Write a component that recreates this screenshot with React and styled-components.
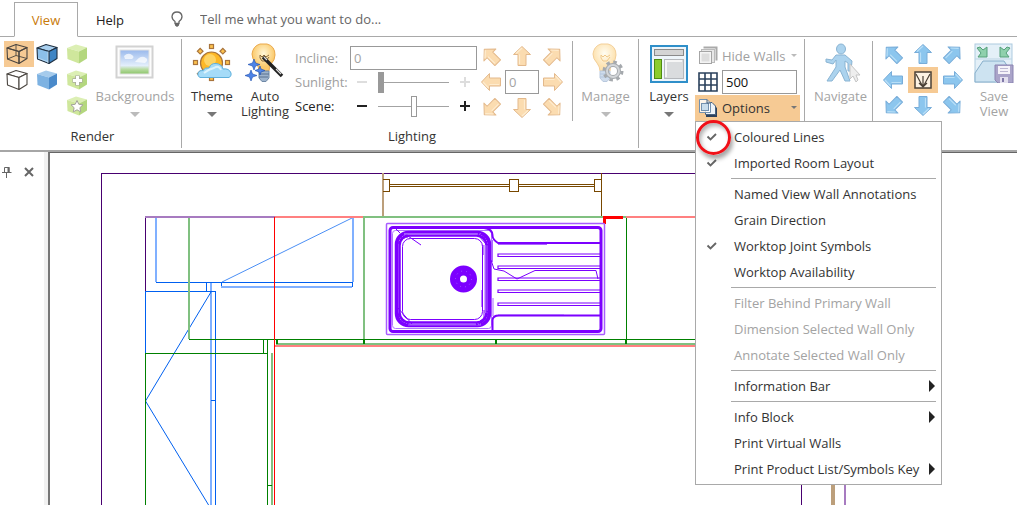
import React, { useState } from 'react'
import styled, { createGlobalStyle, css } from 'styled-components'

const menuGroups = [
  [
    { id: 'coloured', label: 'Coloured Lines', checked: true },
    { id: 'imported', label: 'Imported Room Layout', checked: true },
  ],
  [
    { id: 'named', label: 'Named View Wall Annotations' },
    { id: 'grain', label: 'Grain Direction' },
    { id: 'joint', label: 'Worktop Joint Symbols', checked: true },
    { id: 'availability', label: 'Worktop Availability' },
  ],
  [
    { id: 'filter', label: 'Filter Behind Primary Wall', disabled: true },
    { id: 'dimension', label: 'Dimension Selected Wall Only', disabled: true },
    { id: 'annotate', label: 'Annotate Selected Wall Only', disabled: true },
  ],
  [{ id: 'infobar', label: 'Information Bar', sub: true }],
  [
    { id: 'infoblock', label: 'Info Block', sub: true },
    { id: 'virtual', label: 'Print Virtual Walls' },
    { id: 'product', label: 'Print Product List/Symbols Key', sub: true },
  ],
]

// angle of each arrow, null is the middle cell
const compass = [-45, 0, 45, -90, null, 90, -135, 180, 135]
const compassNames = ['Up left', 'Up', 'Up right', 'Left', '', 'Right', 'Down left', 'Down', 'Down right']

const cubeFills = {
  wire: ['none', 'none', 'none'],
  hidden: ['#fff', '#fff', '#fff'],
  lined: ['#a9d0ef', '#8cc0ea', '#3f85c4'],
  solid: ['#a5cbec', '#7db2e2', '#4a8aca'],
  green: ['#dcefb4', '#cfe79c', '#b4d77e'],
}

function Cube({ kind, mark }) {
  const [top, left, right] = cubeFills[kind]
  const line = kind === 'green' || kind === 'solid' ? 'none' : kind === 'lined' ? '#1f2f40' : '#4a4540'
  return (
    <svg width="22" height="22" viewBox="0 0 22 22" aria-hidden="true">
      <g stroke={line} strokeWidth="1.1" strokeLinejoin="round">
        <path d="M1 5 10 1.500 21 4.500 13 8.500Z" fill={top} />
        <path d="M1 5 13 8.500V20.500L1.500 16Z" fill={left} />
        <path d="M13 8.500 21 4.500V15.500L13 20.500Z" fill={right} />
        {kind === 'wire' && <path d="M10 1.500V12.500M10 12.500 1.500 16M10 12.500 21 15.500" fill="none" strokeWidth="0.9" />}
      </g>
      {kind === 'lined' && <path d="M12 8.500V20M2 15 12 18.800" stroke="#c3e0f6" strokeWidth="0.8" />}
      {mark === 'plus' && <path d="M11.500 6.500V16.500M6.500 11.500H16.500" stroke="#a9a9a0" strokeWidth="4.600" />}
      {mark === 'plus' && <path d="M11.500 7V16M7 11.500H16" stroke="#fff" strokeWidth="3" />}
      {mark === 'star' && (
        <path
          d="M11 5.500 12.800 9.300 17 9.800 13.900 12.700 14.700 16.900 11 14.800 7.300 16.900 8.100 12.700 5 9.800 9.200 9.300Z"
          fill="#fff"
          stroke="#a4a49b"
        />
      )}
    </svg>
  )
}

function Arrow({ angle, tone }) {
  const blue = tone === 'blue'
  return (
    <svg width="22" height="22" viewBox="0 0 22 22" aria-hidden="true">
      <g transform={`rotate(${angle} 11 11)`}>
        <path
          d="M11 1.500 19.500 9.500H15V20.500H7V9.500H2.500Z"
          fill={blue ? '#8cc6ee' : '#fbdcb0'}
          stroke={blue ? '#79add9' : '#e3b98c'}
          strokeLinejoin="round"
        />
        <path d="M11 3 5 8.500M8.500 9.500V19" fill="none" stroke={blue ? '#b9dff7' : '#feeccf'} strokeWidth="1.200" />
      </g>
    </svg>
  )
}

function Bulb({ children, faded }) {
  return (
    <svg width="40" height="40" viewBox="0 0 40 40" aria-hidden="true">
      <defs>
        <radialGradient id={faded ? 'bulbFaded' : 'bulb'} cx="0.5" cy="0.35">
          <stop offset="0" stopColor={faded ? '#fffdf2' : '#fff7d8'} />
          <stop offset="1" stopColor={faded ? '#fde2b0' : '#fbc969'} />
        </radialGradient>
      </defs>
      <path
        d="M15 1H22Q30 3 30 12 30 17 26 21 24 24 24 28H14Q14 24 11 20 7 16 7 11 8 3 15 1Z"
        fill={`url(#${faded ? 'bulbFaded' : 'bulb'})`}
        stroke={faded ? '#f3cf98' : '#eaa94c'}
      />
      <path d="M15 15 17 18H21L24 14M15 15V12L17 14 19 12 21 14 24 12" fill="none" stroke={faded ? '#f0c98a' : '#8b6a3a'} strokeWidth="1" />
      <path d="M14 28H24V35L21 38.500H17L14 35Z" fill={faded ? '#cfdcec' : '#9db3cc'} stroke={faded ? '#b9c9de' : '#6f88a6'} />
      <path d="M14 31H24M14 34H23" stroke={faded ? '#b4c6dd' : '#58718f'} />
      {children}
    </svg>
  )
}

function ThemeIcon() {
  return (
    <svg width="40" height="40" viewBox="0 0 40 40" aria-hidden="true">
      <g fill="#fcc24e" stroke="#a8743c" strokeWidth="1.200">
        {[-135, -90, -45, 0, 45, 90, 180].map((a) => (
          <rect key={a} x="17.500" y="1.500" width="4" height="4" transform={`rotate(${a} 19.500 19.500)`} />
        ))}
        <circle cx="19.500" cy="20" r="11" fill="#fdb827" />
      </g>
      <circle cx="18" cy="17" r="6" fill="#fed465" />
      <path
        d="M8 34.500Q5 33 6 30 7 27 11 27.500 13 24 17 25 19 20 24 20.500 30 21 31 26 37 25 39 30 40 33 37 34.500Z"
        fill="#a5dbf8"
        stroke="#5fb0dc"
      />
      <path d="M12 30Q17 26 22 25 27 22 29 27" fill="none" stroke="#dcf3fd" strokeWidth="2" />
    </svg>
  )
}

function PictureIcon() {
  return (
    <svg width="40" height="40" viewBox="0 0 40 40" aria-hidden="true">
      <defs>
        <linearGradient id="sky" x1="0" y1="0" x2="0" y2="1">
          <stop offset="0" stopColor="#9ab9ec" />
          <stop offset="0.65" stopColor="#e3eefb" />
          <stop offset="0.8" stopColor="#b9dca2" />
          <stop offset="1" stopColor="#8cc56b" />
        </linearGradient>
      </defs>
      <rect x="1.500" y="3.500" width="36" height="31" fill="#fdfdfd" stroke="#d2d2d2" strokeWidth="2" />
      <rect x="5" y="7" width="29" height="24" fill="url(#sky)" stroke="#e2e2e2" />
      <path d="M9 13Q13 9 17 12 20 14 17 16H10ZM20 19Q26 11 31 15 34 17 30 20Z" fill="#fff" opacity="0.7" />
    </svg>
  )
}

function LayersIcon() {
  return (
    <svg width="40" height="40" viewBox="0 0 40 40" aria-hidden="true">
      <rect x="2" y="3" width="36" height="36" fill="#eef5fa" stroke="#2f8fc9" strokeWidth="2" />
      <rect x="5.500" y="6.500" width="29" height="6" fill="#d4d4d4" stroke="#8a8a8a" />
      <rect x="5.500" y="16.500" width="7" height="19" fill="#8ccc2c" stroke="#4f8c12" />
      <rect x="15.500" y="16.500" width="19" height="19" fill="#dadcde" stroke="#b5b8bc" />
      <path d="M17 34V18H33" fill="none" stroke="#f6f6f6" strokeWidth="2" />
    </svg>
  )
}

function NavigateIcon() {
  return (
    <svg width="40" height="40" viewBox="0 0 40 40" aria-hidden="true">
      <g fill="#acd3ee" stroke="#8ab4d3" strokeLinejoin="round">
        <ellipse cx="20" cy="6" rx="4.500" ry="5" />
        <path d="M15 12H24L31 18 30 28 27 28 27 20 24 18V24L29 38H24L19 27 11 38H6L15 24V17L12 21 5 19V16L11 17Z" />
      </g>
      <path d="M29 21V36L32 33 35 39 37 37 35 32H39Z" fill="#eee" stroke="#c5c5c5" />
    </svg>
  )
}

function SaveViewIcon() {
  return (
    <svg width="40" height="40" viewBox="0 0 40 40" aria-hidden="true">
      <rect x="1" y="1" width="37" height="38" fill="#e4f0f8" stroke="#aecbe0" />
      <path d="M1 30 9 18H30L38 30V39H1Z" fill="#cde3f1" stroke="#86aeca" />
      <path d="M1 16H38" stroke="#bdd5e5" />
      <g fill="#8fd0ac" stroke="#55a07b">
        <path d="M3 5 6 4 9 7 13 4V14H4L7 10Z" />
        <path d="M36 5 33 4 30 7 26 4V14H35L32 10Z" />
      </g>
      <path d="M21 22H39V40H24L21 37Z" fill="#aaa4c9" stroke="#8b84b1" />
      <rect x="24" y="23" width="12" height="8" fill="#f5f3f9" />
      <path d="M26 25.500H34M26 28.500H34" stroke="#bdb8d2" />
      <rect x="26" y="34" width="8" height="6" fill="#e4e1ef" />
      <rect x="28" y="35" width="2" height="4" fill="#8079a8" />
    </svg>
  )
}

function WallsIcon() {
  return (
    <svg width="20" height="20" viewBox="0 0 20 20" aria-hidden="true">
      <path d="M5.500 1.500H18.500V14.500" fill="none" stroke="#aaa" strokeWidth="2" />
      <rect x="3.500" y="3.500" width="13" height="13" fill="#e7e7e7" stroke="#bbb" />
      <rect x="1.500" y="5.500" width="12" height="12" fill="#f4f4f4" stroke="#a5a5a5" />
      <rect x="3.500" y="7.500" width="8" height="8" fill="#ddd" />
    </svg>
  )
}

function GridIcon() {
  return (
    <svg width="20" height="20" viewBox="0 0 20 20" aria-hidden="true">
      <path d="M1 1H19V19H1ZM7 1V19M13 1V19M1 7H19M1 13H19" fill="#fff" stroke="#2b415c" strokeWidth="1.600" />
    </svg>
  )
}

function OptionsIcon() {
  return (
    <svg width="20" height="20" viewBox="0 0 20 20" aria-hidden="true">
      <path d="M8 6H15L19 10V19H8Z" fill="#2b415c" />
      <path d="M7.500 4.500H14L17.500 8V16.500H7.500Z" fill="#eef4f9" stroke="#47617f" />
      <path d="M1.500 1.500H9L12.500 5V14.500H1.500Z" fill="#fff" fillOpacity="0.8" stroke="#7390ae" />
      <rect x="3.500" y="5.500" width="7" height="7" fill="#c9ddec" stroke="#7390ae" />
      <path d="M9 1.500V5H12.500" fill="none" stroke="#47617f" />
    </svg>
  )
}

function Check() {
  return (
    <svg width="12" height="10" viewBox="0 0 12 10" aria-hidden="true">
      <path d="M1.500 4.500 4.500 7.500 10 2" fill="none" stroke="#666" strokeWidth="1.900" />
    </svg>
  )
}

// plan view of the kitchen, in drawing units of one pixel
function Plan() {
  return (
    <PlanSvg role="img" aria-label="Kitchen plan">
      <g transform="translate(-50 -153)" fill="none" shapeRendering="crispEdges">
        <g stroke="#480070">
          <path d="M101.500 1000V173.500H801.500V1000M145.500 217V291" />
          <path d="M145 217H275M845 217V1000" stroke="#a77bc0" strokeWidth="2" />
        </g>
        <g stroke="#bc9f7b" strokeWidth="4">
          <path d="M833 350V1000" />
          <path d="M383 173V216" strokeWidth="2" />
        </g>
        <g stroke="#784800">
          <path d="M601.500 173V216M389 184.500H509M389 186.500H509M519 184.500H595M519 186.500H595" />
          <path d="M383 179.500H389.500V191.500H383M509.500 179.500H518.500V191.500H509.500ZM601 179.500H594.500V191.500H601" />
        </g>
        <g stroke="#80b0ff" strokeWidth="2">
          <path d="M156 218V282M353 218V282M221 287H352M211 283V1000" />
        </g>
        <g stroke="#0060f0">
          <path d="M156 282.500H353M221.500 282V286M352.500 282V287M206.500 282V291M145 291.500H215.500V1000M145.500 291V354M211 400.500H215" />
          <path d="M222 282 352 218" stroke="#4b8ff5" shapeRendering="auto" />
          <path d="M211 292 145.500 401 211 509" shapeRendering="auto" />
        </g>
        <g stroke="#80c080" strokeWidth="2">
          <path d="M189 218V339M364 218V340M276 344H845M272 353V1000M363 217H626" />
        </g>
        <g stroke="#008000">
          <path d="M145.500 354V1000M145 353.500H267M263.500 339V353M267.500 339V1000M189 339.500H845M626.500 217V344M267 485H272" />
          <path d="M276.500 339V344M364 339V344M495.500 339V344M626 339V344" strokeWidth="2" />
        </g>
        <g stroke="#ff8080" strokeWidth="2">
          <path d="M275 217H363M626 217H845M275 346H845" />
        </g>
        <path d="M274.500 217V1000" stroke="#f00" />
        <path d="M604.500 224V217.500H623" stroke="#f00" strokeWidth="3" />
      </g>
      <g transform="translate(-50 -153)" fill="none" stroke="#7c00ff">
        <rect x="386.500" y="223.500" width="218" height="111" rx="1" stroke="#a95cff" strokeWidth="1.500" />
        <rect x="390" y="227.500" width="211" height="104" rx="3" strokeWidth="3" />
        <rect x="392.500" y="230.500" width="99" height="98" rx="3" stroke="#b377ff" />
        <rect x="396.500" y="232.500" width="93" height="93" rx="12" strokeWidth="3.500" />
        <rect x="399.500" y="235.500" width="87" height="87" rx="10" strokeWidth="2.500" />
        <rect x="402.500" y="238.500" width="80" height="81" rx="8" />
        <path d="M404 234H481M408 324.500H481M485.500 245V313" strokeWidth="2" stroke="#a55cff" />
        <path d="M396 229 400 233M397 244 407 235M396 241 404 233M481 233 489 242M478 235 487 245M397 313 407 323M398 308 412 324M478 323 489 314M484 310V322M408 236 421 245M483 245V255M482 290V307" />
        <path d="M397 244Q399 237 408 236M397 313Q400 322 410 324M476 324Q487 321 488 311M478 233Q487 236 488 246" strokeWidth="3" strokeDasharray="1.500 1" />
        <circle cx="463.500" cy="279" r="8.500" strokeWidth="10" />
        <circle cx="463.500" cy="279" r="8" stroke="#a45aff" strokeDasharray="1 4" />
        <path d="M484 228Q493 229 492.500 236 493 240 498 243H600M492.500 331V320Q493 315.500 499 315.500H600" strokeWidth="2" />
        <path d="M498 244.500H547M498 314.500H564M492.500 240V262M493 298V316" stroke="#aa66ff" />
        <path d="M600 254H498V256.500H600M600 266H498V268.500H600M600 278H498V280.500H600M600 290H498V292.500H600M600 303H498V305.500H600" strokeWidth="1.200" />
        <path d="M491 260 494 269 504 271 517 279 535 270.500H596L598 279" />
      </g>
    </PlanSvg>
  )
}

function Compass({ tone, disabled, children }) {
  return (
    <CompassGrid $wide={!disabled}>
      {compass.map((angle, i) =>
        angle === null ? (
          <React.Fragment key={i}>{children}</React.Fragment>
        ) : (
          <IconButton key={i} disabled={disabled} aria-label={compassNames[i]}>
            <Arrow angle={angle} tone={tone} />
          </IconButton>
        )
      )}
    </CompassGrid>
  )
}

export default function App() {
  const [groups, setGroups] = useState(menuGroups)
  const [open, setOpen] = useState(true)
  const [scene, setScene] = useState(50)

  const toggle = (id) => {
    setGroups(groups.map((g) => g.map((it) => (it.id === id && !it.sub ? { ...it, checked: !it.checked } : it))))
  }

  return (
    <>
      <GlobalStyle />
      <Window>
        <Tabs>
          <Tab $active>View</Tab>
          <Tab>Help</Tab>
          <TellMe>
            <svg width="12" height="17" viewBox="0 0 12 17" aria-hidden="true">
              <path d="M4 12.500V10.500Q1 8.500 1 5.500 1.500 1 6 1 10.500 1 11 5.500 11 8.500 8 10.500V12.500Z" fill="none" stroke="#666" strokeWidth="1.300" />
              <path d="M4 12H8V14.500L6 16 4 14.500Z" fill="#666" />
            </svg>
            <input aria-label="Tell me" placeholder="Tell me what you want to do..." />
          </TellMe>
        </Tabs>

        <Ribbon>
          <Group>
            <GroupBody $end={5}>
              <CubeColumns>
                <div>
                  <CubeButton $active aria-label="Wireframe"><Cube kind="wire" /></CubeButton>
                  <CubeButton aria-label="Hidden line"><Cube kind="hidden" /></CubeButton>
                </div>
                <div>
                  <CubeButton aria-label="Colour with lines"><Cube kind="lined" /></CubeButton>
                  <CubeButton aria-label="Colour"><Cube kind="solid" /></CubeButton>
                </div>
                <div>
                  <CubeButton disabled aria-label="Render"><Cube kind="green" /></CubeButton>
                  <CubeButton disabled aria-label="Add render"><Cube kind="green" mark="plus" /></CubeButton>
                  <CubeButton disabled aria-label="Best render"><Cube kind="green" mark="star" /></CubeButton>
                </div>
              </CubeColumns>
              <BigButton disabled $w={82}>
                <PictureIcon />
                <span>Backgrounds</span>
                <Caret $big />
              </BigButton>
            </GroupBody>
            <GroupLabel>Render</GroupLabel>
          </Group>

          <Group>
            <GroupBody>
              <BigButton $w={52}>
                <ThemeIcon />
                <span>Theme</span>
                <Caret $big />
              </BigButton>
              <BigButton $w={54}>
                <Bulb>
                  <path d="M18 14 37 33" stroke="#222" strokeWidth="3.500" />
                  <path d="M19 14 22 17M31 26 36 31" stroke="#ddd" strokeWidth="1.200" />
                  <g fill="#4d84e8" stroke="#1f4fae" strokeWidth="0.600">
                    <path d="M9 16 10.500 20 15 21.500 10.500 23 9 27 7.500 23 3 21.500 7.500 20Z" />
                    <path d="M6 27 7.500 31 12 32.500 7.500 34 6 38 4.500 34 0 32.500 4.500 31Z" />
                    <path d="M15 23 16 26 20 27.500 16 29 15 32 14 29 10 27.500 14 26Z" />
                  </g>
                </Bulb>
                <span>Auto<br />Lighting</span>
              </BigButton>
              <LightForm>
                <Field>
                  <FieldLabel htmlFor="incline" $muted>Incline:</FieldLabel>
                  <TextBox id="incline" defaultValue="0" disabled />
                </Field>
                <Field>
                  <FieldLabel htmlFor="sunlight" $muted>Sunlight:</FieldLabel>
                  <Step disabled aria-label="Less sunlight" />
                  <Slider id="sunlight" type="range" defaultValue="0" disabled />
                  <Step disabled $plus aria-label="More sunlight" />
                </Field>
                <Field>
                  <FieldLabel htmlFor="scene">Scene:</FieldLabel>
                  <Step aria-label="Less scene light" onClick={() => setScene(Math.max(0, scene - 10))} />
                  <Slider id="scene" type="range" value={scene} onChange={(e) => setScene(Number(e.target.value))} />
                  <Step $plus aria-label="More scene light" onClick={() => setScene(Math.min(100, scene + 10))} />
                </Field>
              </LightForm>
              <Compass tone="orange" disabled>
                <TextBox aria-label="Direction" defaultValue="0" disabled $small />
              </Compass>
              <Divider />
              <BigButton disabled $w={65}>
                <Bulb faded>
                  <circle cx="27" cy="28" r="6" fill="none" stroke="#a5a9ad" strokeWidth="4" />
                  <circle cx="27" cy="28" r="9" fill="none" stroke="#a5a9ad" strokeWidth="3" strokeDasharray="3.500 3.570" />
                  <circle cx="27" cy="28" r="6" fill="none" stroke="#d3d6d9" strokeWidth="2" />
                </Bulb>
                <span>Manage</span>
                <Caret $big />
              </BigButton>
            </GroupBody>
            <GroupLabel>Lighting</GroupLabel>
          </Group>

          <Group>
            <GroupBody $end={4}>
              <BigButton $w={52}>
                <LayersIcon />
                <span>Layers</span>
                <Caret $big />
              </BigButton>
              <LayerTools>
                <ToolRow disabled>
                  <WallsIcon />
                  <span>Hide Walls</span>
                  <Caret />
                </ToolRow>
                <ToolRow as="label">
                  <GridIcon />
                  <TextBox defaultValue="500" aria-label="Grid size" />
                </ToolRow>
                <MenuAnchor>
                  <ToolRow $active={open} aria-haspopup="menu" aria-expanded={open} onClick={() => setOpen(!open)}>
                    <OptionsIcon />
                    <span>Options</span>
                    <Caret />
                  </ToolRow>
                  {open && (
                    <Menu role="menu">
                      {groups.map((group, i) => (
                        <MenuGroup key={i}>
                          {group.map((item) => (
                            <MenuItem key={item.id} disabled={item.disabled} role="menuitem" onClick={() => toggle(item.id)}>
                              <i>{item.checked && <Check />}</i>
                              {item.label}
                              {item.sub && <SubArrow />}
                            </MenuItem>
                          ))}
                        </MenuGroup>
                      ))}
                      <Ring />
                    </Menu>
                  )}
                </MenuAnchor>
              </LayerTools>
            </GroupBody>
          </Group>

          <Group>
            <GroupBody>
              <BigButton disabled $w={63}>
                <NavigateIcon />
                <span>Navigate</span>
              </BigButton>
              <Divider />
              <Compass tone="blue">
                <IconButton $active aria-label="Plan view">
                  <svg width="18" height="18" viewBox="0 0 18 18" aria-hidden="true">
                    <rect x="1" y="1" width="16" height="16" fill="#fdf3e4" stroke="#4a4036" strokeWidth="1.500" />
                    <path d="M2 3 9 16 16 3M9 5V16M5 12 9 16 13 12" fill="none" stroke="#4a4036" strokeWidth="1.200" />
                  </svg>
                </IconButton>
              </Compass>
              <BigButton disabled $w={46}>
                <SaveViewIcon />
                <span>Save<br />View</span>
              </BigButton>
            </GroupBody>
          </Group>
        </Ribbon>

        <Workspace>
          <SidePanel>
            <IconButton aria-label="Pin">
              <svg width="10" height="12" viewBox="0 0 10 12" aria-hidden="true">
                <path d="M2.500 6.500V1.500H7V6.500M0 6.500H9.500M4.500 7V12" fill="none" stroke="#666" />
                <path d="M6.500 1V6" stroke="#666" strokeWidth="2" />
              </svg>
            </IconButton>
            <IconButton aria-label="Close">
              <svg width="10" height="10" viewBox="0 0 10 10" aria-hidden="true">
                <path d="M1 1 9 9M9 1 1 9" stroke="#666" strokeWidth="2" />
              </svg>
            </IconButton>
          </SidePanel>
          <Canvas>
            <Plan />
          </Canvas>
        </Workspace>
      </Window>
    </>
  )
}

const GlobalStyle = createGlobalStyle`
  * {
    box-sizing: border-box;
  }
  body {
    margin: 0;
    background: #fff;
  }
  body, button, input {
    font-family: "Open Sans", "Noto Sans", sans-serif;
    font-size: 13px;
    color: #333;
  }
  button {
    border: none;
    background: none;
    padding: 0;
  }
  svg {
    flex-shrink: 0;
  }
`

const Window = styled.div`
  display: flex;
  flex-direction: column;
  height: 100vh;
  overflow: hidden;
`

const Tabs = styled.nav`
  display: flex;
  height: 37px;
  padding: 2px 0 0 14px;
  flex-shrink: 0;
  border-bottom: 1px solid #a9a9a9;
`

const Tab = styled.button`
  width: 64px;
  height: 35px;
  color: #222;
  border: 1px solid transparent;
  ${({ $active }) => $active && css`
    color: #c87a0a;
    background: #fff;
    border-color: #a9a9a9;
    border-bottom-color: #fff;
  `}
`

const TellMe = styled.label`
  display: flex;
  align-items: center;
  gap: 17px;
  flex: 1;
  padding-left: 29px;

  input {
    flex: 1;
    border: none;
    outline: none;
    padding: 0;
    background: none;
  }
  input::placeholder {
    color: #666;
    opacity: 1;
  }
`

const Ribbon = styled.header`
  display: flex;
  flex-shrink: 0;
  height: 115px;
  padding: 2px 0;
  border-bottom: 2px solid #a6a6a6;
`

const Group = styled.section`
  display: flex;
  flex-direction: column;
  flex-shrink: 0;
  padding: 2px 0 0 4px;
  border-right: 1px solid #a9a9a9;

  &:last-child {
    border-right: none;
  }
`

const GroupBody = styled.div`
  display: flex;
  height: 86px;
  padding-right: ${({ $end }) => $end || 0}px;
`

const GroupLabel = styled.div`
  text-align: center;
  line-height: 18px;
`

const CubeColumns = styled.div`
  display: flex;

  > div {
    display: flex;
    flex-direction: column;
  }
`

const CubeButton = styled.button`
  display: flex;
  align-items: center;
  width: 30px;
  height: 26px;
  padding-left: 2px;
  background: ${({ $active }) => ($active ? '#f6ca94' : 'none')};
`

const BigButton = styled.button`
  display: flex;
  flex-direction: column;
  align-items: center;
  width: ${({ $w }) => $w}px;
  padding-top: 2px;
  line-height: 15px;
  white-space: nowrap;

  svg {
    margin-bottom: 6px;
  }
  &:disabled {
    color: #a3a3a3;
  }
`

const Caret = styled.span`
  border: ${({ $big }) => ($big ? 5 : 3)}px solid transparent;
  border-top-color: #777;
  border-bottom: none;
  margin-top: ${({ $big }) => ($big ? 8 : 0)}px;

  :disabled > & {
    border-top-color: #bbb;
  }
`

const Divider = styled.hr`
  width: 1px;
  height: 80px;
  margin: 0;
  border: none;
  background: #a9a9a9;
`

const LightForm = styled.div`
  display: flex;
  flex-direction: column;
  width: 185px;
  padding: 5px 0 0 3px;
`

const Field = styled.div`
  display: flex;
  align-items: center;
  height: 24px;
`

const FieldLabel = styled.label`
  width: 55px;
  flex-shrink: 0;
  color: ${({ $muted }) => ($muted ? '#a0a0a0' : '#222')};
`

const TextBox = styled.input`
  flex: 1;
  min-width: 0;
  width: ${({ $small }) => ($small ? '34px' : 'auto')};
  height: 24px;
  padding: 0 3px;
  color: #111;
  background: #fff;
  border: 1px solid #999;
  border-radius: 0;

  &:disabled {
    color: #a3a3a3;
  }
`

const Step = styled.button`
  width: 24px;
  height: 20px;
  flex-shrink: 0;
  background:
    linear-gradient(#222, #222) center / 10px 2px no-repeat,
    linear-gradient(#222, #222) center / ${({ $plus }) => ($plus ? '2px 10px' : '0 0')} no-repeat;

  &:disabled {
    opacity: 0.15;
  }
`

const thumb = css`
  appearance: none;
  width: 6px;
  height: 21px;
  margin-top: -10px;
  border: 1px solid #999;
  border-radius: 0;
  background: #fff;
`

const Slider = styled.input`
  appearance: none;
  flex: 1;
  min-width: 0;
  height: 22px;
  margin: 0 4px;
  background: none;

  &::-webkit-slider-runnable-track {
    height: 1px;
    background: #a3a3a3;
  }
  &::-webkit-slider-thumb {
    ${thumb}
  }
  &:disabled::-webkit-slider-thumb {
    background: #999;
  }
`

const CompassGrid = styled.div`
  display: grid;
  grid-template-columns: repeat(3, auto);
  grid-template-rows: repeat(3, 26px);
  align-items: center;
  padding: ${({ $wide }) => ($wide ? '0 3px 0 5px' : '2px 5px 0 0')};
`

const IconButton = styled.button`
  display: flex;
  align-items: center;
  justify-content: center;
  min-width: 30px;
  height: 26px;
  background: ${({ $active }) => ($active ? '#f6ca94' : 'none')};

  &:disabled {
    min-width: 28px;
  }
`

const LayerTools = styled.div`
  display: flex;
  flex-direction: column;
  gap: 1px;
  width: 105px;
  padding-top: 2px;
`

const ToolRow = styled.button`
  display: flex;
  align-items: center;
  gap: 4px;
  width: 100%;
  height: 25px;
  padding: 0 3px;
  white-space: nowrap;
  background: ${({ $active }) => ($active ? '#f6ca94' : 'none')};

  span:nth-child(2) {
    flex: 1;
    text-align: left;
  }
  &:disabled {
    color: #a0a0a0;
  }
`

const MenuAnchor = styled.div`
  position: relative;
  padding-bottom: 1px;
  background: #f6ca94;
`

const Menu = styled.div`
  position: absolute;
  z-index: 5;
  top: 100%;
  left: 0;
  width: 247px;
  padding: 2px 0;
  background: #fff;
  border: 1px solid #a9a9a9;
`

const MenuGroup = styled.div`
  & + &::before {
    content: '';
    display: block;
    height: 1px;
    margin: 2px 5px 2px 35px;
    background: #a9a9a9;
  }
`

const MenuItem = styled.button`
  display: flex;
  align-items: center;
  width: 100%;
  height: 26px;
  padding-right: 6px;
  white-space: nowrap;

  i {
    width: 38px;
    padding-left: 10px;
    line-height: 10px;
    text-align: left;
  }
  &:disabled {
    color: #a3a3a3;
  }
  &:hover:enabled {
    background: #fdf0df;
  }
`

const SubArrow = styled.span`
  margin-left: auto;
  border: 6px solid transparent;
  border-left-color: #222;
  border-right: none;
`

const Ring = styled.div`
  position: absolute;
  top: -2px;
  left: 0;
  width: 35px;
  height: 35px;
  border: 3px solid #f01018;
  border-radius: 50%;
  box-shadow: 2px 4px 4px rgba(0, 0, 0, 0.35), inset 2px 3px 4px rgba(0, 0, 0, 0.3);
  pointer-events: none;
`

const Workspace = styled.main`
  display: flex;
  flex: 1;
  min-height: 0;
`

const SidePanel = styled.aside`
  display: flex;
  flex-shrink: 0;
  width: 48px;
  padding-top: 7px;
  border-right: 4px solid #f1f1f1;

  button {
    min-width: 0;
    width: 22px;
  }
  button:first-child {
    width: 14px;
  }
  button:last-child {
    width: 32px;
  }
`

const Canvas = styled.div`
  flex: 1;
  min-width: 0;
  border-left: 2px solid #777;
  border-top: 1px solid #666;
`

const PlanSvg = styled.svg`
  display: block;
  width: 100%;
  height: 100%;
`
